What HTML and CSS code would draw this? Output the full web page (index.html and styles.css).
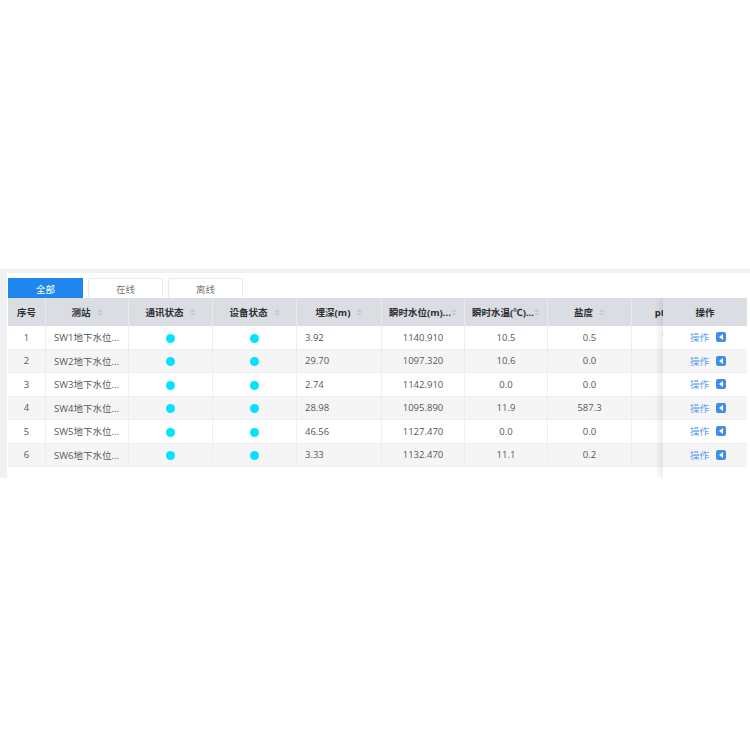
FILE: index.html
```html
<!DOCTYPE html>
<html>
<head>
<meta charset="utf-8">
<link rel="stylesheet" href="styles.css">
</head>
<body>
<div class="outer">
  <div class="panel">
    <div class="tabs">
      <div class="tab active">全部</div>
      <div class="tab">在线</div>
      <div class="tab">离线</div>
    </div>
    <div class="table-wrap">
      <div class="row head">
        <div class="c c-idx">序号</div>
        <div class="c">测站<span class="sort"><i class="up"></i><i class="dn"></i></span></div>
        <div class="c">通讯状态<span class="sort"><i class="up"></i><i class="dn"></i></span></div>
        <div class="c">设备状态<span class="sort"><i class="up"></i><i class="dn"></i></span></div>
        <div class="c">埋深(m)<span class="sort"><i class="up"></i><i class="dn"></i></span></div>
        <div class="c">瞬时水位(m)...<span class="sort tight"><i class="up"></i><i class="dn"></i></span></div>
        <div class="c">瞬时水温(℃)...<span class="sort tight"><i class="up"></i><i class="dn"></i></span></div>
        <div class="c">盐度<span class="sort"><i class="up"></i><i class="dn"></i></span></div>
        <div class="c ph">pH<span class="sort"><i class="up"></i><i class="dn"></i></span></div>
      </div>
      <div class="row">
        <div class="c">1</div><div class="c l">SW1地下水位...</div><div class="c"><span class="dot"></span></div><div class="c"><span class="dot"></span></div><div class="c l">3.92</div><div class="c">1140.910</div><div class="c">10.5</div><div class="c">0.5</div><div class="c phv">7.15</div>
      </div>
      <div class="row odd">
        <div class="c">2</div><div class="c l">SW2地下水位...</div><div class="c"><span class="dot"></span></div><div class="c"><span class="dot"></span></div><div class="c l">29.70</div><div class="c">1097.320</div><div class="c">10.6</div><div class="c">0.0</div><div class="c phv">7.2</div>
      </div>
      <div class="row">
        <div class="c">3</div><div class="c l">SW3地下水位...</div><div class="c"><span class="dot"></span></div><div class="c"><span class="dot"></span></div><div class="c l">2.74</div><div class="c">1142.910</div><div class="c">0.0</div><div class="c">0.0</div><div class="c phv">7.0</div>
      </div>
      <div class="row odd">
        <div class="c">4</div><div class="c l">SW4地下水位...</div><div class="c"><span class="dot"></span></div><div class="c"><span class="dot"></span></div><div class="c l">28.98</div><div class="c">1095.890</div><div class="c">11.9</div><div class="c">587.3</div><div class="c phv">7.3</div>
      </div>
      <div class="row">
        <div class="c">5</div><div class="c l">SW5地下水位...</div><div class="c"><span class="dot"></span></div><div class="c"><span class="dot"></span></div><div class="c l">46.56</div><div class="c">1127.470</div><div class="c">0.0</div><div class="c">0.0</div><div class="c phv">7.0</div>
      </div>
      <div class="row odd">
        <div class="c">6</div><div class="c l">SW6地下水位...</div><div class="c"><span class="dot"></span></div><div class="c"><span class="dot"></span></div><div class="c l">3.33</div><div class="c">1132.470</div><div class="c">11.1</div><div class="c">0.2</div><div class="c phv">7.1</div>
      </div>
      <div class="fixed">
        <div class="fc head-fc">操作</div>
        <div class="fc"><a class="op">操作</a><span class="btn"></span></div>
        <div class="fc odd"><a class="op">操作</a><span class="btn"></span></div>
        <div class="fc"><a class="op">操作</a><span class="btn"></span></div>
        <div class="fc odd"><a class="op">操作</a><span class="btn"></span></div>
        <div class="fc"><a class="op">操作</a><span class="btn"></span></div>
        <div class="fc odd"><a class="op">操作</a><span class="btn"></span></div>
      </div>
    </div>
  </div>
</div>
</body>
</html>
```
FILE: styles.css
```css
* { box-sizing: border-box; }
html, body { margin: 0; padding: 0; background: #fff; }
body {
  font-family: "Open Sans", "Noto Sans CJK SC", sans-serif;
  font-size: 9.5px;
  color: #54575c;
}
.outer {
  margin-top: 269px;
  background: #f0f1f3;
  padding: 4px 0 0 7px;
}
.panel {
  background: #fff;
  padding: 5px 3px 0 1px;
}
.tabs {
  display: flex;
  gap: 5px;
  height: 20px;
}
.tab {
  width: 75px;
  height: 20px;
  border: 1px solid #e9ebee;
  border-bottom: none;
  display: flex;
  align-items: center;
  justify-content: center;
  color: #7a7a7a;
  font-size: 9.5px;
  background: #fff;
}
.tab.active {
  background: #1e86ec;
  border-color: #1e86ec;
  color: #fff;
}
.table-wrap {
  position: relative;
  overflow: hidden;
  height: 180px;
}
.row {
  display: grid;
  grid-template-columns: 38px 83px 84px 84px 85px 83px 83px 84px 84px;
  width: max-content;
  height: 23.5px;
  border-bottom: 1px solid #ebeef5;
  background: #fff;
}
.row.odd { background: #f5f5f6; }
.row.head {
  height: 28px;
  background: #dadde2;
  border-bottom: none;
}
.c {
  display: flex;
  align-items: center;
  justify-content: center;
  border-right: 1px solid #ebeef5;
  white-space: nowrap;
  overflow: hidden;
}
.c.l { justify-content: flex-start; padding-left: 8px; }
.c.ph { padding-right: 12px; }
.c.phv { padding-right: 4px; }
.head .c {
  font-weight: bold;
  color: #2b2d30;
  border-right: 1px solid #e8eaee;
}
.sort {
  display: inline-flex;
  flex-direction: column;
  gap: 1px;
  margin-left: 6px;
}
.sort.tight { margin-left: 0; }
.sort i {
  display: block;
  width: 0;
  height: 0;
  border-left: 3.5px solid transparent;
  border-right: 3.5px solid transparent;
}
.sort .up { border-bottom: 3.5px solid #c8ccd2; }
.sort .dn { border-top: 3.5px solid #c8ccd2; }
.dot {
  width: 9px;
  height: 9px;
  border-radius: 50%;
  background: #00e4ff;
  margin-top: 2px;
}
.fixed {
  position: absolute;
  top: 0;
  right: 0;
  width: 84px;
  height: 100%;
  background: #fff;
  box-shadow: -4px 0 6px rgba(0, 0, 0, 0.08);
}
.fc {
  height: 23.5px;
  display: flex;
  align-items: center;
  justify-content: center;
  border-bottom: 1px solid #ebeef5;
  background: #fff;
  gap: 7px;
  padding-left: 6px;
}
.fc.odd { background: #f5f5f6; }
.fc.head-fc {
  height: 28px;
  background: #dadde2;
  font-weight: bold;
  color: #2b2d30;
  border-bottom: none;
  padding-left: 0;
}
.op { color: #5a9ef0; font-size: 9.5px; }
.btn {
  width: 10px;
  height: 10px;
  border-radius: 2px;
  background: #3f8fea;
  position: relative;
}
.btn::after {
  content: "";
  position: absolute;
  left: 3px;
  top: 2px;
  border-top: 3px solid transparent;
  border-bottom: 3px solid transparent;
  border-right: 4px solid #fff;
}
```
